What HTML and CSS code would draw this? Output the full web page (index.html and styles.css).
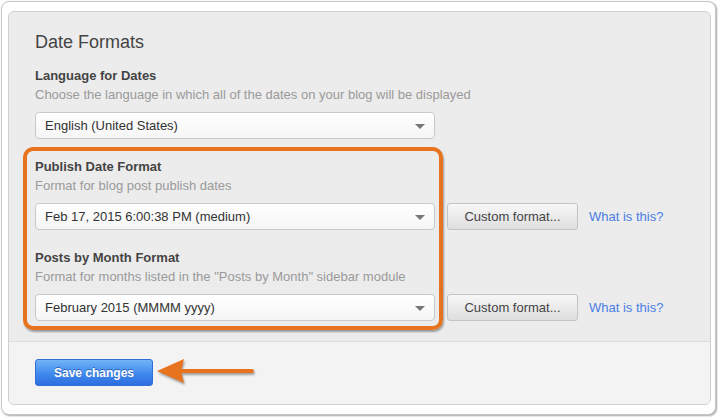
FILE: index.html
```html
<!DOCTYPE html>
<html lang="en">
<head>
    <meta charset="UTF-8">
    <meta name="viewport" content="width=device-width, initial-scale=1.0">
    <title>Date Formats</title>
    <link rel="stylesheet" href="styles.css">
</head>
<body>
    <div class="frame">
        <div class="panel">
            <div class="settings">
                <h2 class="title">Date Formats</h2>

                <div class="field">
                    <div class="label">Language for Dates</div>
                    <div class="help">Choose the language in which all of the dates on your blog will be displayed</div>
                    <div class="row">
                        <div class="select">English (United States)<span class="caret"></span></div>
                    </div>
                </div>

                <div class="field">
                    <div class="label">Publish Date Format</div>
                    <div class="help">Format for blog post publish dates</div>
                    <div class="row">
                        <div class="select">Feb 17, 2015 6:00:38 PM (medium)<span class="caret"></span></div>
                        <button class="btn">Custom format...</button>
                        <a class="link" href="#">What is this?</a>
                    </div>
                </div>

                <div class="field">
                    <div class="label">Posts by Month Format</div>
                    <div class="help">Format for months listed in the "Posts by Month" sidebar module</div>
                    <div class="row">
                        <div class="select">February 2015 (MMMM yyyy)<span class="caret"></span></div>
                        <button class="btn">Custom format...</button>
                        <a class="link" href="#">What is this?</a>
                    </div>
                </div>

                <!-- annotation drawn over the screenshot -->
                <div class="highlight"></div>
            </div>

            <div class="footer">
                <button class="save">Save changes</button>
                <svg class="arrow" width="104" height="30" viewBox="0 0 104 30">
                    <path d="M2 14 L29 2 L26 14 L29 26 Z" fill="#e8731f" />
                    <rect x="25" y="12" width="74" height="4" rx="2" fill="#e8731f" />
                </svg>
            </div>
        </div>
    </div>
</body>
</html>
```

FILE: styles.css
```css
html, body {
    margin: 0;
    padding: 0;
    background: #fff;
    font-family: "Liberation Sans", Arial, sans-serif;
    font-size: 13px;
    color: #444;
}
body {
    padding: 1px 2px 2px 1px;
}
.frame {
    background: #fff;
    border: 1px solid #c6c6c6;
    border-radius: 8px;
    box-shadow: 1px 1px 2px rgba(0, 0, 0, 0.35);
    padding: 9px 4px 9px 6px;
}
.panel {
    border: 1px solid #cfcfcf;
    border-radius: 6px;
    overflow: hidden;
    background: #ececec;
}
.settings {
    position: relative;
    padding: 19px 20px 20px 26px;
}
.title {
    margin: 0 0 13px;
    font-size: 18px;
    font-weight: normal;
    line-height: 22px;
    color: #444;
}
.field + .field {
    margin-top: 18px;
}
.label {
    font-weight: bold;
    line-height: 19px;
    color: #444;
}
.help {
    line-height: 19px;
    color: #9a9a9a;
}
.row {
    display: flex;
    align-items: center;
    margin-top: 8px;
}
.select {
    position: relative;
    box-sizing: border-box;
    width: 400px;
    height: 27px;
    padding: 0 9px;
    line-height: 25px;
    border: 1px solid #c9c9c9;
    border-radius: 4px;
    background: linear-gradient(#ffffff, #f5f5f5);
    color: #333;
}
.caret {
    position: absolute;
    right: 9px;
    top: 11px;
    width: 0;
    height: 0;
    border-left: 5px solid transparent;
    border-right: 5px solid transparent;
    border-top: 5px solid #777;
}
.btn {
    box-sizing: border-box;
    width: 131px;
    height: 27px;
    margin-left: 12px;
    border: 1px solid #c4c4c4;
    border-radius: 3px;
    background: linear-gradient(#f7f7f7, #dedede);
    font-family: inherit;
    font-size: 13px;
    color: #444;
    padding: 0;
}
.link {
    margin-left: 11px;
    color: #4a7ee6;
    text-decoration: none;
}
.highlight {
    position: absolute;
    left: 14px;
    top: 135px;
    width: 420px;
    height: 183px;
    box-sizing: border-box;
    border: 4px solid #e8731f;
    border-radius: 10px;
    box-shadow: 1px 2px 2px rgba(0, 0, 0, 0.35);
}
.footer {
    position: relative;
    border-top: 1px solid #dcdcdc;
    background: #f3f3f3;
    padding: 17px 26px 18px;
}
.save {
    display: block;
    box-sizing: border-box;
    width: 118px;
    height: 27px;
    padding: 0;
    border: 1px solid #2f6fd6;
    border-radius: 3px;
    background: linear-gradient(#72b4f7, #3d86ec 60%, #2f6ee0);
    font-family: inherit;
    font-size: 12px;
    font-weight: bold;
    color: #fff;
    text-shadow: 0 -1px 0 rgba(0, 40, 120, 0.5);
}
.arrow {
    position: absolute;
    left: 146px;
    top: 15px;
    filter: drop-shadow(1px 2px 1px rgba(0, 0, 0, 0.35));
}
```
